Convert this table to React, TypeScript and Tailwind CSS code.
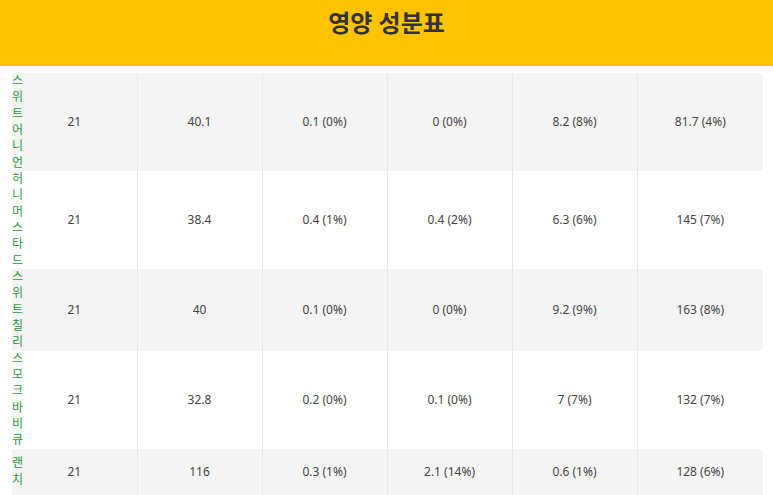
const rows = [
  { name: "스위트어니언", values: ["21", "40.1", "0.1 (0%)", "0 (0%)", "8.2 (8%)", "81.7 (4%)"] },
  { name: "허니머스타드", values: ["21", "38.4", "0.4 (1%)", "0.4 (2%)", "6.3 (6%)", "145 (7%)"] },
  { name: "스위트칠리", values: ["21", "40", "0.1 (0%)", "0 (0%)", "9.2 (9%)", "163 (8%)"] },
  { name: "스모크바비큐", values: ["21", "32.8", "0.2 (0%)", "0.1 (0%)", "7 (7%)", "132 (7%)"] },
  { name: "랜치", values: ["21", "116", "0.3 (1%)", "2.1 (14%)", "0.6 (1%)", "128 (6%)"] },
];

export default function App() {
  return (
    <div className="min-h-screen bg-white font-['Noto_Sans','Noto_Sans_CJK_KR',sans-serif] text-[#444]">
      {/* Header */}
      <header className="h-[66px] bg-[#ffc300] pt-[5px] text-center">
        <h1 className="text-[24px] font-bold leading-[36px] text-[#333]">영양 성분표</h1>
      </header>

      {/* Nutrition table */}
      <div className="pl-[12px] pr-[10px] pt-[7px]">
        <table className="w-[751px] table-fixed border-collapse text-[12px]">
          <colgroup>
            <col className="w-[12px]" />
            <col className="w-[113px]" />
            <col className="w-[125px]" />
            <col className="w-[125px]" />
            <col className="w-[125px]" />
            <col className="w-[125px]" />
            <col className="w-[126px]" />
          </colgroup>
          <tbody>
            {rows.map((row, i) => (
              <tr key={row.name} className={i % 2 === 0 ? "bg-[#f4f4f4]" : "bg-white"}>
                <th className="break-all p-0 text-left align-middle text-[12px] font-normal leading-[16.33px] text-[#2a9a3a]">
                  {row.name}
                </th>
                {row.values.map((v, j) => (
                  <td
                    key={j}
                    className={
                      j === 0
                        ? "px-0 py-[15px] pr-[12px] text-center align-middle leading-[16px]"
                        : "border-l border-[#e8e8e8] px-0 py-[15px] text-center align-middle leading-[16px]"
                    }
                  >
                    {v}
                  </td>
                ))}
              </tr>
            ))}
          </tbody>
        </table>
      </div>
    </div>
  );
}
